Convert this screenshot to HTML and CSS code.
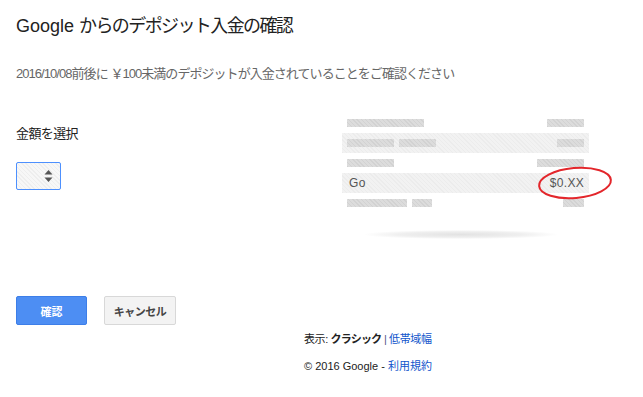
FILE: index.html
```html
<!DOCTYPE html>
<html lang="ja">
<head>
    <meta charset="UTF-8">
    <meta name="viewport" content="width=device-width, initial-scale=1.0">
    <title>デポジット入金の確認</title>
    <link rel="stylesheet" href="styles.css">
</head>
<body>
    <div class="page">
        <h1 class="title">Google <span class="title-ja">からのデポジット入金の確認</span></h1>
        <p class="subtitle">2016/10/08前後に ￥100未満のデポジットが入金されていることをご確認ください</p>

        <div class="main">
            <div class="form-col">
                <div class="label">金額を選択</div>
                <div class="amount-select">
                    <svg class="spin" width="9" height="12" viewBox="0 0 9 12">
                        <path d="M4.5 0 L8.5 4.5 L0.5 4.5 Z" fill="#555"/>
                        <path d="M4.5 12 L8.5 7.5 L0.5 7.5 Z" fill="#555"/>
                    </svg>
                </div>
            </div>

            <!-- statement preview -->
            <div class="statement">
                <div class="row">
                    <span class="bar" style="width:77px"></span>
                    <span class="spacer"></span>
                    <span class="bar" style="width:37px"></span>
                </div>
                <div class="row shaded">
                    <span class="bar" style="width:47px"></span>
                    <span class="bar" style="width:37px"></span>
                    <span class="spacer"></span>
                    <span class="bar" style="width:27px"></span>
                </div>
                <div class="row">
                    <span class="bar" style="width:47px"></span>
                    <span class="spacer"></span>
                    <span class="bar" style="width:47px"></span>
                </div>
                <div class="row shaded">
                    <span class="desc">Go</span>
                    <span class="spacer"></span>
                    <span class="amount">$0.XX</span>
                </div>
                <div class="row">
                    <span class="bar" style="width:60px"></span>
                    <span class="bar" style="width:20px"></span>
                    <span class="spacer"></span>
                    <span class="bar" style="width:21px"></span>
                </div>
                <div class="shadow"></div>
                <svg class="circle" width="78" height="36" viewBox="0 0 78 36">
                    <ellipse cx="38" cy="18" rx="36" ry="15" fill="none" stroke="#e3262b" stroke-width="2" transform="rotate(-5 38 18)"/>
                </svg>
            </div>
        </div>

        <div class="buttons">
            <button class="btn btn-primary">確認</button>
            <button class="btn btn-default">キャンセル</button>
        </div>

        <div class="footer">
            <div class="footer-line view-line">表示: <b>クラシック</b> <span class="sep">|</span> <a href="#">低帯域幅</a></div>
            <div class="footer-line">© 2016 Google - <a href="#">利用規約</a></div>
        </div>
    </div>
</body>
</html>
```

FILE: styles.css
```css
body {
    margin: 0;
    background: #fff;
    font-family: "Liberation Sans", Arial, "Noto Sans CJK JP", sans-serif;
    color: #222;
}

.page {
    padding: 0 16px;
}

.title {
    margin: 0;
    padding-top: 14px;
    font-size: 18px;
    font-weight: normal;
    line-height: 24px;
    color: #222;
}

.title-ja {
    letter-spacing: -1.6px;
}

.subtitle {
    margin: 28px 0 0;
    font-size: 13px;
    line-height: 16px;
    color: #666;
    letter-spacing: -0.95px;
}

.main {
    display: flex;
    margin-top: 31px;
}

.form-col {
    flex: 1;
}

.label {
    margin-top: 13px;
    font-size: 13px;
    line-height: 16px;
    letter-spacing: -0.6px;
    color: #222;
}

.amount-select {
    margin-top: 20px;
    width: 43px;
    height: 26px;
    border: 1px solid #4d90fe;
    border-radius: 2px;
    background-color: #f7f7f7;
    background-image: repeating-linear-gradient(45deg, #eee 0 1px, transparent 1px 3px);
    display: flex;
    align-items: center;
    justify-content: flex-end;
}

.spin {
    margin-right: 7px;
}

.statement {
    position: relative;
    width: 247px;
    margin-right: 38px;
}

.row {
    display: flex;
    align-items: center;
    gap: 5px;
    height: 20px;
    padding: 0 5px;
}

.row.shaded {
    background-color: #f2f2f2;
    background-image: repeating-linear-gradient(45deg, #ececec 0 1px, transparent 1px 3px);
}

.bar {
    height: 8px;
    background-color: #dcdcdc;
    background-image: repeating-linear-gradient(45deg, #d2d2d2 0 1px, transparent 1px 3px);
}

.spacer {
    flex: 1;
}

.desc,
.amount {
    font-size: 12px;
    color: #555;
    letter-spacing: 0.3px;
}

.desc {
    margin-left: 2px;
}

.shadow {
    margin: 17px auto 0 23px;
    width: 192px;
    height: 9px;
    background: radial-gradient(ellipse at center, #e2e2e2 0%, #efefef 45%, rgba(255,255,255,0) 72%);
}

.circle {
    position: absolute;
    left: 195px;
    top: 52px;
}

.buttons {
    display: flex;
    gap: 17px;
    margin-top: 57px;
}

.btn {
    height: 29px;
    width: 72px;
    border-radius: 2px;
    font-family: "Noto Sans CJK JP", sans-serif;
    font-size: 11px;
    font-weight: bold;
    padding: 0;
    cursor: pointer;
}

.btn-primary {
    background: #4d8ef3;
    border: 1px solid #3d7ee8;
    color: #fff;
    width: 71px;
}

.btn-default {
    background: #f3f3f3;
    border: 1px solid #d8d8d8;
    color: #444;
    letter-spacing: -0.5px;
}

.footer {
    padding-left: 288px;
    margin-top: 1px;
    font-size: 11px;
    color: #222;
}

.footer-line {
    line-height: 27px;
}

.view-line {
    letter-spacing: -0.4px;
}

.footer b {
    letter-spacing: -0.8px;
}

.footer .sep {
    color: #558;
}

.footer a {
    color: #1155cc;
    text-decoration: none;
}
```
